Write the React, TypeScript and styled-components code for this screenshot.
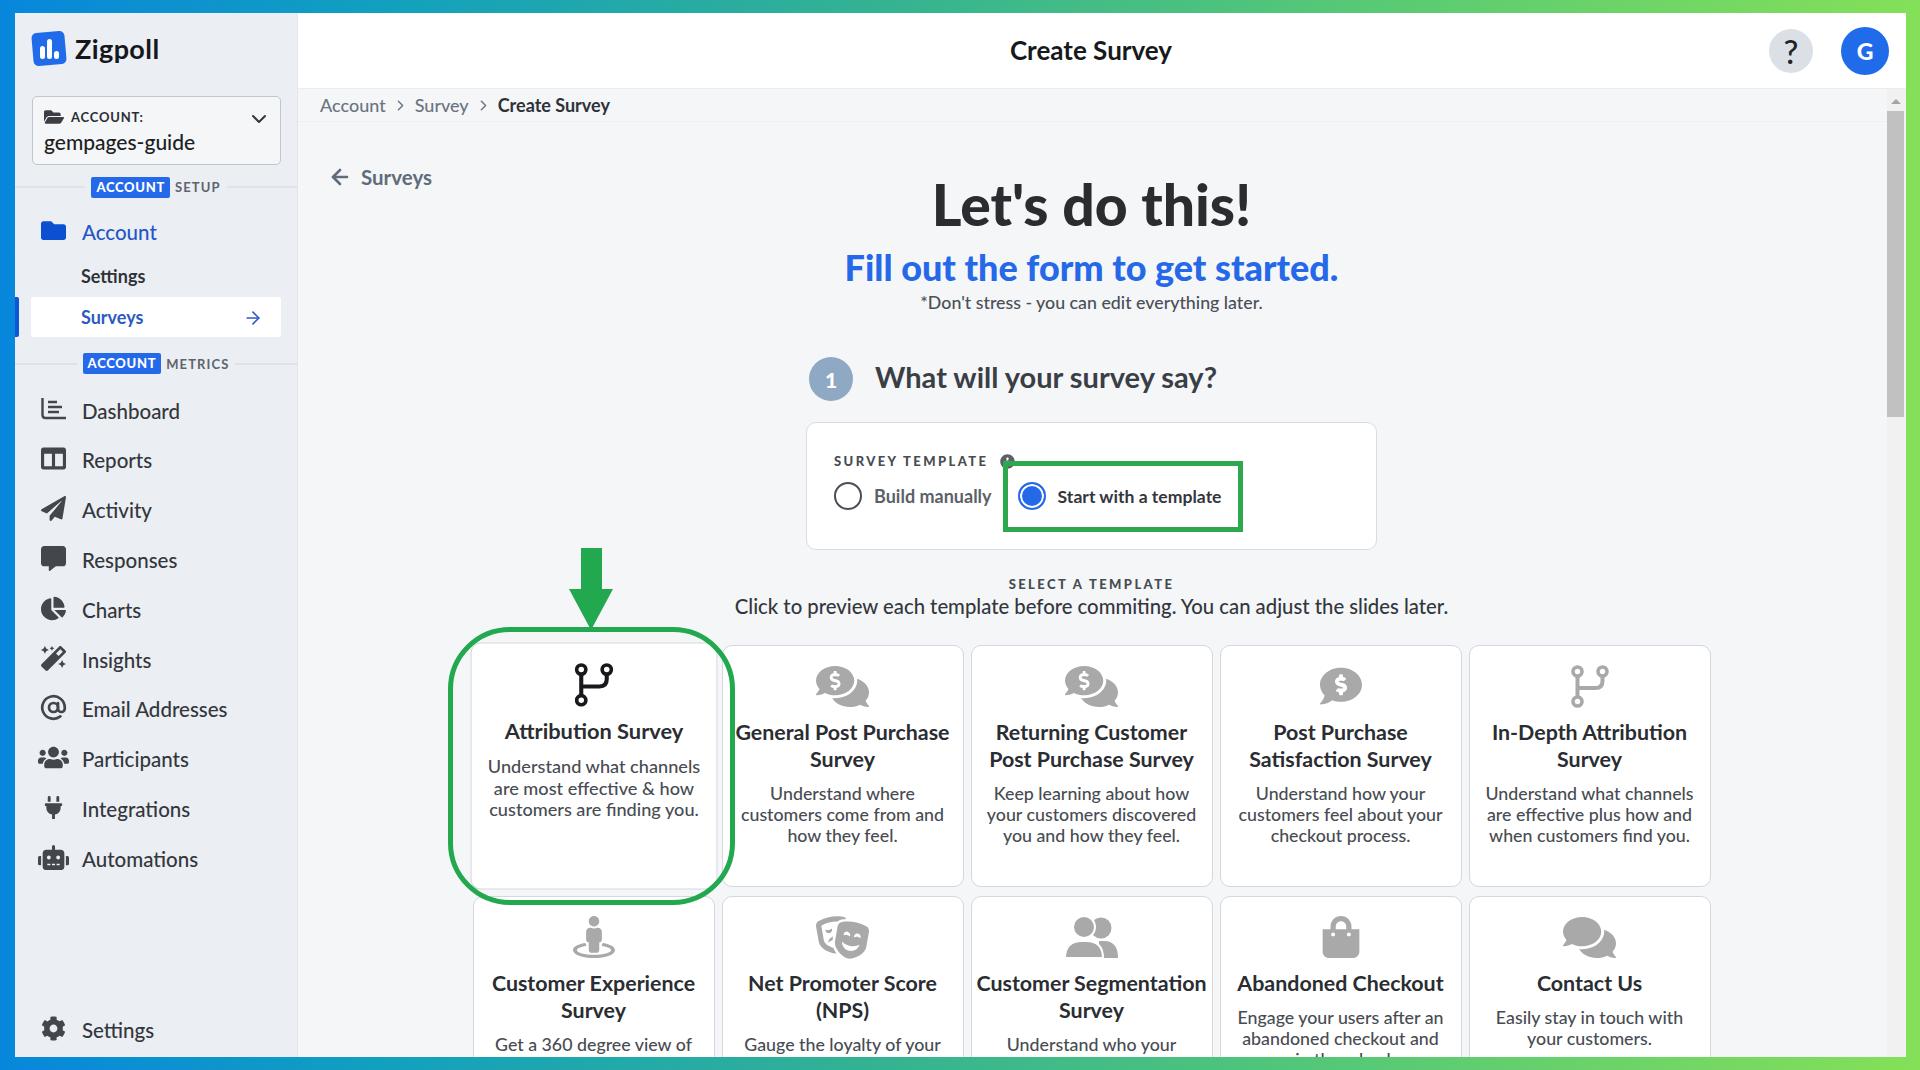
import React from 'react';
import styled, { createGlobalStyle } from 'styled-components';
import {
  FaChartPie,
  FaCog,
  FaColumns,
  FaCommentAlt,
  FaCommentDollar,
  FaComments,
  FaCommentsDollar,
  FaFolder,
  FaFolderOpen,
  FaInfoCircle,
  FaMagic,
  FaPaperPlane,
  FaPlug,
  FaRobot,
  FaShoppingBag,
  FaStreetView,
  FaTheaterMasks,
  FaUsers,
} from 'react-icons/fa';
import { FiArrowLeft, FiArrowRight, FiAtSign, FiChevronDown, FiChevronRight } from 'react-icons/fi';

const FONT = `Lato, "Open Sans", sans-serif`;

const GlobalStyle = createGlobalStyle`
  html, body {
    margin: 0;
    padding: 0;
    height: 100%;
    overflow: hidden;
    font-family: ${FONT};
  }
  * {
    box-sizing: border-box;
  }
`;

const Frame = styled.div`
  width: 1920px;
  height: 1070px;
  padding: 13px 14px 13px 15px;
  background: linear-gradient(90deg, #0787dc 0%, #12a0bf 20%, #33b293 45%, #56c876 70%, #84e058 100%);
`;

const Window = styled.div`
  display: flex;
  width: 100%;
  height: 100%;
  overflow: hidden;
  background: #f4f6f8;
`;

const Sidebar = styled.aside`
  display: flex;
  flex-direction: column;
  flex: 0 0 283px;
  background: #ebeef2;
  border-right: 1px solid #e3e7eb;
`;

const Brand = styled.div`
  display: flex;
  align-items: center;
  gap: 7px;
  height: 83px;
  padding: 0 0 12px 16px;
  font-size: 27px;
  font-weight: 700;
  letter-spacing: 0.4px;
  color: #15171a;
`;

const AccountSelect = styled.div`
  position: relative;
  width: 249px;
  height: 69px;
  margin-left: 17px;
  padding: 10px 11px;
  background: #f4f6f8;
  border: 1px solid #bfc6cf;
  border-radius: 5px;
`;

const AccountLabel = styled.div`
  display: flex;
  align-items: center;
  gap: 7px;
  font-size: 13px;
  font-weight: 700;
  letter-spacing: 0.8px;
  color: #2b2e33;
  svg {
    font-size: 20px;
    color: #3b3f45;
  }
`;

const AccountName = styled.div`
  margin-top: 3px;
  font-size: 21px;
  font-weight: 500;
  line-height: 24px;
  color: #1c1e22;
`;

const SelectChevron = styled(FiChevronDown)`
  position: absolute;
  top: 10px;
  right: 9px;
  font-size: 24px;
  color: #33373c;
`;

const Divider = styled.div<{ $top: number }>`
  display: flex;
  align-items: center;
  gap: 6px;
  height: 22px;
  margin-top: ${({ $top }) => $top}px;
  &:before,
  &:after {
    content: '';
    flex: 1;
    height: 2px;
    background: #dfe3e8;
  }
`;

const Badge = styled.span`
  padding: 3px 5px;
  background: #2569e8;
  border-radius: 2px;
  font-size: 13px;
  font-weight: 900;
  line-height: 15px;
  letter-spacing: 0.7px;
  color: #ffffff;
`;

const DividerText = styled.span`
  margin-left: -1px;
  font-size: 13px;
  font-weight: 700;
  letter-spacing: 1.1px;
  color: #5d646d;
`;

const AccountGroup = styled.div`
  margin-top: 9px;
`;

const MainNav = styled.nav`
  margin-top: 11px;
`;

const NavItem = styled.div<{ $active?: boolean }>`
  display: flex;
  align-items: center;
  gap: 16px;
  height: 49.8px;
  padding-left: 26px;
  font-size: 20.5px;
  font-weight: 500;
  color: ${({ $active }) => ($active ? '#2456c8' : '#33373d')};
`;

const NavIcon = styled.span<{ $active?: boolean }>`
  display: flex;
  flex: 0 0 25px;
  width: 25px;
  min-width: 0;
  justify-content: center;
  margin-top: -3px;
  color: ${({ $active }) => ($active ? '#0d4fd1' : '#43474d')};
  svg {
    flex-shrink: 0;
  }
`;

const SubItem = styled.div`
  height: 38px;
  padding-left: 66px;
  font-size: 18px;
  font-weight: 700;
  line-height: 38px;
  color: #2f3338;
`;

const ActiveRow = styled.div`
  position: relative;
  display: flex;
  align-items: center;
  justify-content: space-between;
  width: 250px;
  height: 40px;
  margin: 2px 0 0 16px;
  padding: 0 18px 0 50px;
  background: #ffffff;
  border-radius: 2px;
  font-size: 18px;
  font-weight: 700;
  color: #2c5ac4;
  svg {
    font-size: 20px;
    margin-top: 2px;
  }
  &:before {
    content: '';
    position: absolute;
    left: -16px;
    top: 0;
    width: 4px;
    height: 40px;
    background: #0d56d8;
    border-radius: 0 2px 2px 0;
  }
`;

const SidebarFoot = styled.div`
  margin-top: auto;
  padding-bottom: 2px;
`;

const Content = styled.div`
  display: flex;
  flex: 1;
  flex-direction: column;
  min-width: 0;
`;

const Header = styled.header`
  position: relative;
  display: flex;
  flex: 0 0 76px;
  align-items: center;
  justify-content: center;
  background: #ffffff;
  border-bottom: 1px solid #eaedf0;
`;

const PageTitle = styled.h1`
  margin: -2px 22px 0 0;
  font-size: 26px;
  font-weight: 700;
  color: #17191c;
`;

const HeaderActions = styled.div`
  position: absolute;
  top: 14px;
  right: 17px;
  display: flex;
  align-items: center;
  gap: 28px;
`;

const HelpButton = styled.div`
  display: flex;
  align-items: center;
  justify-content: center;
  width: 44px;
  height: 44px;
  margin-left: -1px;
  background: #dbe0e6;
  border-radius: 50%;
  font-size: 33px;
  font-weight: 500;
  color: #20242a;
`;

const Avatar = styled.div`
  display: flex;
  align-items: center;
  justify-content: center;
  width: 48px;
  height: 48px;
  background: #1f6bea;
  border-radius: 50%;
  font-size: 23px;
  font-weight: 900;
  color: #ffffff;
`;

const Body = styled.div`
  display: flex;
  flex: 1;
  min-height: 0;
`;

const Main = styled.main`
  flex: 1;
  min-width: 0;
  overflow: hidden;
`;

const Breadcrumb = styled.nav`
  display: flex;
  align-items: center;
  gap: 6px;
  height: 33px;
  padding-left: 22px;
  border-bottom: 1px solid #eef0f3;
  font-size: 18px;
  font-weight: 500;
  color: #6b7480;
  svg {
    font-size: 17px;
  }
`;

const Crumb = styled.span<{ $current?: boolean }>`
  color: ${({ $current }) => ($current ? '#2e3238' : '#6b7480')};
  font-weight: ${({ $current }) => ($current ? 700 : 500)};
`;

const Page = styled.div`
  display: flex;
  flex-direction: column;
  align-items: center;
  padding: 44px 2px 0 0;
`;

const BackLink = styled.div`
  display: flex;
  align-items: center;
  align-self: flex-start;
  gap: 9px;
  height: 24px;
  margin: -1px 0 -14px 30px;
  font-size: 20.5px;
  font-weight: 700;
  color: #5f6c7b;
  svg {
    font-size: 24px;
    stroke-width: 2.6;
  }
`;

const Hero = styled.h2`
  margin: -1px 0 1px;
  font-size: 57px;
  font-weight: 900;
  line-height: 60px;
  color: #2a2c30;
`;

const HeroSub = styled.h3`
  margin: 12px 0 1px;
  font-size: 36px;
  font-weight: 900;
  line-height: 40px;
  color: #2569e8;
`;

const HeroNote = styled.p`
  margin: 3px 0 0;
  font-size: 17.8px;
  font-weight: 500;
  line-height: 22px;
  color: #4a4f56;
`;

const StepRow = styled.div`
  display: flex;
  align-items: center;
  gap: 22px;
  width: 571px;
  margin-top: 44px;
  padding-left: 3px;
`;

const StepNumber = styled.div`
  display: flex;
  align-items: center;
  justify-content: center;
  width: 44px;
  height: 44px;
  background: #8fa8c4;
  border-radius: 50%;
  font-size: 21px;
  font-weight: 900;
  color: #ffffff;
`;

const StepTitle = styled.div`
  margin-top: -6px;
  font-size: 29px;
  font-weight: 700;
  color: #3a3e45;
`;

const FormCard = styled.section`
  position: relative;
  width: 571px;
  height: 128px;
  margin-top: 21px;
  padding: 30px 27px 0;
  background: #ffffff;
  border: 1px solid #d9dde3;
  border-radius: 10px;
`;

const FieldLabel = styled.div`
  display: flex;
  align-items: center;
  gap: 12px;
  font-size: 13px;
  font-weight: 900;
  line-height: 16px;
  letter-spacing: 2.4px;
  color: #474c53;
  svg {
    font-size: 15px;
    color: #5b6068;
  }
`;

const RadioRow = styled.div`
  display: flex;
  align-items: center;
  margin-top: 13px;
`;

const Radio = styled.span<{ $checked?: boolean }>`
  flex: 0 0 28px;
  height: 28px;
  border-radius: 50%;
  border: 2px solid ${({ $checked }) => ($checked ? '#2569e8' : '#4a4e54')};
  background: ${({ $checked }) => ($checked ? '#2569e8' : '#ffffff')};
  box-shadow: ${({ $checked }) => ($checked ? 'inset 0 0 0 2px #ffffff' : 'none')};
`;

const RadioText = styled.span<{ $checked?: boolean }>`
  margin: 0 26px 0 12px;
  font-size: ${({ $checked }) => ($checked ? '17.6px' : '18px')};
  font-weight: 700;
  color: ${({ $checked }) => ($checked ? '#33373d' : '#5c6168')};
`;

const HighlightBox = styled.div`
  position: absolute;
  left: 196px;
  top: 38px;
  width: 240px;
  height: 71px;
  border: 5px solid #2da84f;
`;

const SectionLabel = styled.div`
  margin-top: 26px;
  font-size: 13px;
  font-weight: 900;
  line-height: 16px;
  letter-spacing: 2.4px;
  color: #474c53;
`;

const SectionHint = styled.div`
  margin-top: 2px;
  font-size: 20.3px;
  font-weight: 500;
  line-height: 24px;
  color: #33373d;
`;

const TemplateGrid = styled.div`
  position: relative;
  display: grid;
  grid-template-columns: repeat(5, 242px);
  grid-auto-rows: 242px;
  gap: 9px 7px;
  margin-top: 27px;
`;

const TemplateCard = styled.article<{ $selected?: boolean }>`
  display: flex;
  flex-direction: column;
  align-items: center;
  padding: 19px 4px 0;
  background: #ffffff;
  border: 1px solid #d3d8df;
  border-radius: 10px;
  text-align: center;
  transform: ${({ $selected }) => ($selected ? 'scale(1.02)' : 'none')};
`;

const TemplateIcon = styled.div<{ $selected?: boolean }>`
  display: flex;
  align-items: center;
  justify-content: center;
  height: 42px;
  color: ${({ $selected }) => ($selected ? '#17191d' : '#a9a9a9')};
`;

const TemplateTitle = styled.div`
  margin-top: 12px;
  font-size: 21.4px;
  font-weight: 700;
  line-height: 27px;
  color: #2a2d32;
`;

const TemplateText = styled.div`
  margin-top: 10px;
  padding: 0 9px;
  font-size: 17.8px;
  font-weight: 500;
  line-height: 21px;
  color: #484c52;
`;

const SelectionRing = styled.div`
  position: absolute;
  left: -25px;
  top: -18px;
  width: 287px;
  height: 278px;
  border: 5px solid #22a84f;
  border-radius: 62px;
  pointer-events: none;
`;

const DownArrow = styled.svg`
  position: absolute;
  left: 96px;
  top: -97px;
`;

const Scrollbar = styled.div`
  display: flex;
  flex: 0 0 19px;
  flex-direction: column;
  align-items: flex-start;
  background: #f1f1f1;
`;

const ScrollArrow = styled.div`
  width: 0;
  height: 0;
  margin: 10px 0 0 4px;
  border-left: 5px solid transparent;
  border-right: 5px solid transparent;
  border-bottom: 5px solid #a3a3a3;
`;

const ScrollThumb = styled.div`
  width: 17px;
  height: 306px;
  margin-top: 7px;
  background: #c1c1c1;
`;

const Logo = () => (
  <svg width="37" height="38" viewBox="0 0 37 38">
    <rect x="1.5" y="2" width="33" height="33" rx="5" fill="#1f6bea" transform="rotate(-5 18 18.5)" />
    <rect x="9" y="16" width="5" height="13" rx="2.5" fill="#ffffff" />
    <rect x="16" y="9" width="5" height="20" rx="2.5" fill="#ffffff" />
    <rect x="23" y="21" width="5" height="8" rx="2.5" fill="#ffffff" />
  </svg>
);

const BranchIcon = () => (
  <svg width="38" height="43" viewBox="0 0 38 43" fill="none" stroke="currentColor">
    <circle cx="6.5" cy="6.5" r="4.5" strokeWidth="3.6" />
    <circle cx="6.5" cy="36.5" r="4.5" strokeWidth="3.6" />
    <circle cx="31.5" cy="6.5" r="4.5" strokeWidth="3.6" />
    <path d="M6.5 11v21" strokeWidth="4" />
    <path d="M31.5 11v5q0 7-7 7H6.5" strokeWidth="4" />
  </svg>
);

const DashboardIcon = () => (
  <svg width="25" height="22" viewBox="0 0 25 22" fill="none" stroke="currentColor" strokeWidth="2.4">
    <path d="M1.5 0v17q0 3 3 3H25" />
    <path d="M7 4h9M7 9h14M7 14h11" />
  </svg>
);

const SegmentIcon = () => (
  <svg width="53" height="42" viewBox="0 0 53 42" fill="currentColor">
    <circle cx="36" cy="12" r="10.5" />
    <path d="M34 25h5q14 0 14 17H34z" />
    <circle cx="19" cy="11" r="11" stroke="#ffffff" strokeWidth="2" />
    <path d="M0 42q0-17 17-17h4q17 0 17 17z" stroke="#ffffff" strokeWidth="2" />
  </svg>
);

const mainNav = [
  { label: 'Dashboard', icon: <DashboardIcon /> },
  { label: 'Reports', icon: <FaColumns size={25} /> },
  { label: 'Activity', icon: <FaPaperPlane size={25} /> },
  { label: 'Responses', icon: <FaCommentAlt size={25} /> },
  { label: 'Charts', icon: <FaChartPie size={25} /> },
  { label: 'Insights', icon: <FaMagic size={25} /> },
  { label: 'Email Addresses', icon: <FiAtSign size={27} strokeWidth={2.4} /> },
  { label: 'Participants', icon: <FaUsers size={31} /> },
  { label: 'Integrations', icon: <FaPlug size={23} /> },
  { label: 'Automations', icon: <FaRobot size={31} /> },
];

const templates = [
  {
    title: 'Attribution Survey',
    text: 'Understand what channels are most effective & how customers are finding you.',
    icon: <BranchIcon />,
    selected: true,
  },
  {
    title: 'General Post Purchase Survey',
    text: 'Understand where customers come from and how they feel.',
    icon: <FaCommentsDollar size={53} />,
  },
  {
    title: 'Returning Customer Post Purchase Survey',
    text: 'Keep learning about how your customers discovered you and how they feel.',
    icon: <FaCommentsDollar size={53} />,
  },
  {
    title: 'Post Purchase Satisfaction Survey',
    text: 'Understand how your customers feel about your checkout process.',
    icon: <FaCommentDollar size={42} />,
  },
  {
    title: 'In-Depth Attribution Survey',
    text: 'Understand what channels are effective plus how and when customers find you.',
    icon: <BranchIcon />,
  },
  {
    title: 'Customer Experience Survey',
    text: 'Get a 360 degree view of your customers.',
    icon: <FaStreetView size={42} />,
  },
  {
    title: 'Net Promoter Score (NPS)',
    text: 'Gauge the loyalty of your customers.',
    icon: <FaTheaterMasks size={53} />,
  },
  {
    title: 'Customer Segmentation Survey',
    text: 'Understand who your customers are.',
    icon: <SegmentIcon />,
  },
  {
    title: 'Abandoned Checkout',
    text: 'Engage your users after an abandoned checkout and win them back.',
    icon: <FaShoppingBag size={42} />,
  },
  {
    title: 'Contact Us',
    text: 'Easily stay in touch with your customers.',
    icon: <FaComments size={53} />,
  },
];

export default function App() {
  return (
    <Frame>
      <GlobalStyle />
      <Window>
        <Sidebar>
          <Brand>
            <Logo />
            Zigpoll
          </Brand>
          <AccountSelect>
            <AccountLabel>
              <FaFolderOpen />
              ACCOUNT:
            </AccountLabel>
            <AccountName>gempages-guide</AccountName>
            <SelectChevron />
          </AccountSelect>
          <Divider $top={11}>
            <Badge>ACCOUNT</Badge>
            <DividerText>SETUP</DividerText>
          </Divider>
          <AccountGroup>
            <NavItem $active>
              <NavIcon $active>
                <FaFolder size={25} />
              </NavIcon>
              Account
            </NavItem>
            <SubItem>Settings</SubItem>
            <ActiveRow>
              Surveys
              <FiArrowRight />
            </ActiveRow>
          </AccountGroup>
          <Divider $top={16}>
            <Badge>ACCOUNT</Badge>
            <DividerText>METRICS</DividerText>
          </Divider>
          <MainNav>
            {mainNav.map((item) => (
              <NavItem key={item.label}>
                <NavIcon>{item.icon}</NavIcon>
                {item.label}
              </NavItem>
            ))}
          </MainNav>
          <SidebarFoot>
            <NavItem>
              <NavIcon>
                <FaCog size={25} />
              </NavIcon>
              Settings
            </NavItem>
          </SidebarFoot>
        </Sidebar>
        <Content>
          <Header>
            <PageTitle>Create Survey</PageTitle>
            <HeaderActions>
              <HelpButton>?</HelpButton>
              <Avatar>G</Avatar>
            </HeaderActions>
          </Header>
          <Body>
            <Main>
              <Breadcrumb>
                <Crumb>Account</Crumb>
                <FiChevronRight />
                <Crumb>Survey</Crumb>
                <FiChevronRight />
                <Crumb $current>Create Survey</Crumb>
              </Breadcrumb>
              <Page>
                <BackLink>
                  <FiArrowLeft />
                  Surveys
                </BackLink>
                <Hero>Let's do this!</Hero>
                <HeroSub>Fill out the form to get started.</HeroSub>
                <HeroNote>*Don't stress - you can edit everything later.</HeroNote>
                <StepRow>
                  <StepNumber>1</StepNumber>
                  <StepTitle>What will your survey say?</StepTitle>
                </StepRow>
                <FormCard>
                  <FieldLabel>
                    SURVEY TEMPLATE
                    <FaInfoCircle />
                  </FieldLabel>
                  <RadioRow>
                    <Radio />
                    <RadioText>Build manually</RadioText>
                    <Radio $checked />
                    <RadioText $checked>Start with a template</RadioText>
                  </RadioRow>
                  <HighlightBox />
                </FormCard>
                <SectionLabel>SELECT A TEMPLATE</SectionLabel>
                <SectionHint>
                  Click to preview each template before commiting. You can adjust the slides later.
                </SectionHint>
                <TemplateGrid>
                  {templates.map((t) => (
                    <TemplateCard key={t.title} $selected={t.selected}>
                      <TemplateIcon $selected={t.selected}>{t.icon}</TemplateIcon>
                      <TemplateTitle>{t.title}</TemplateTitle>
                      <TemplateText>{t.text}</TemplateText>
                    </TemplateCard>
                  ))}
                  <SelectionRing />
                  <DownArrow width="44" height="82" viewBox="0 0 44 82">
                    <path d="M12 0h21v41h11L22 82 0 41h12z" fill="#22a84f" />
                  </DownArrow>
                </TemplateGrid>
              </Page>
            </Main>
            <Scrollbar>
              <ScrollArrow />
              <ScrollThumb />
            </Scrollbar>
          </Body>
        </Content>
      </Window>
    </Frame>
  );
}
